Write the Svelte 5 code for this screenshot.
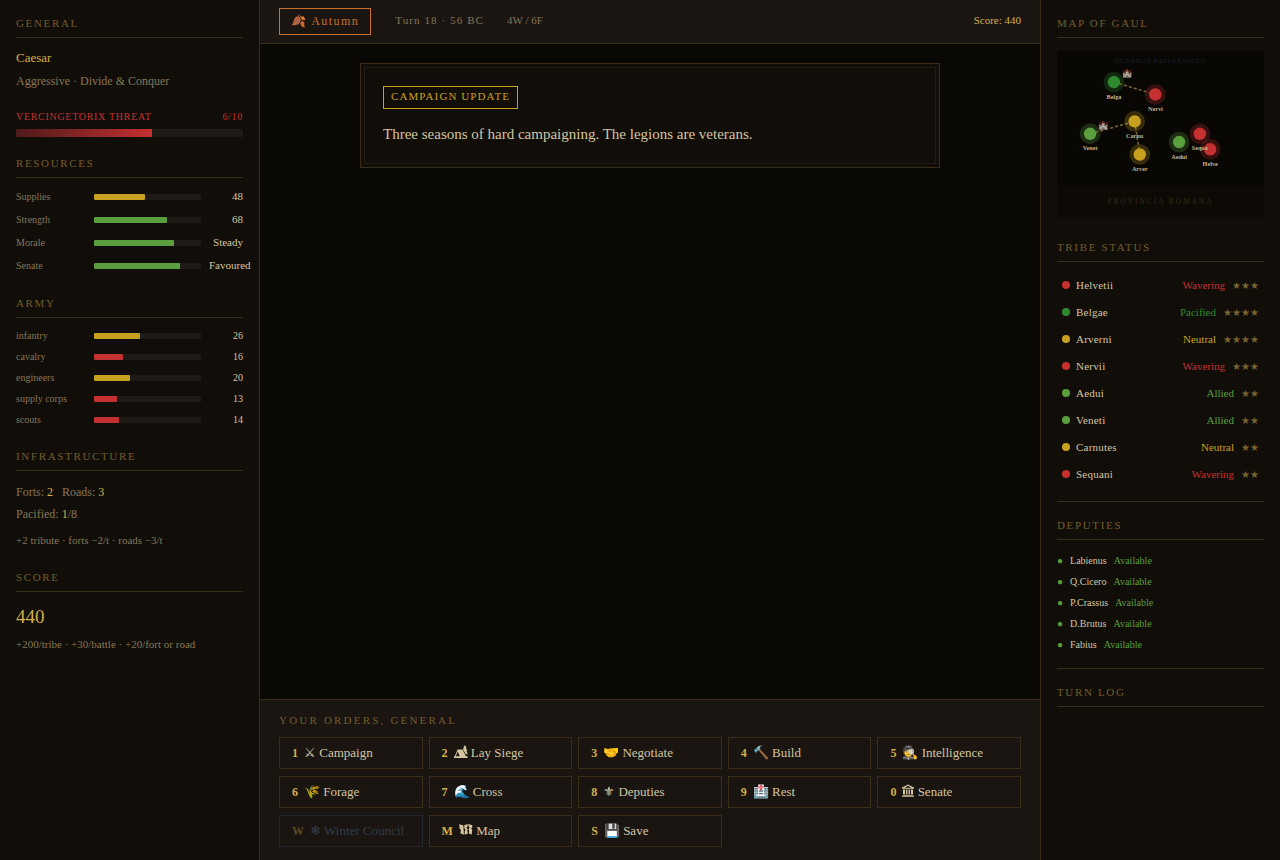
<script>
  const resources = [
    { label: 'Supplies', pct: 48, value: '48', tone: 'gold' },
    { label: 'Strength', pct: 68, value: '68', tone: 'green' },
    { label: 'Morale', pct: 75, value: 'Steady', tone: 'green' },
    { label: 'Senate', pct: 80, value: 'Favoured', tone: 'green' }
  ];

  const ARMY_MAX = 60;
  const army = [
    { label: 'infantry', value: 26, tone: 'gold' },
    { label: 'cavalry', value: 16, tone: 'red' },
    { label: 'engineers', value: 20, tone: 'gold' },
    { label: 'supply corps', value: 13, tone: 'red' },
    { label: 'scouts', value: 14, tone: 'red' }
  ];

  const tribes = [
    { name: 'Helvetii', status: 'Wavering', stars: 3, x: 148, y: 95 },
    { name: 'Belgae', status: 'Pacified', stars: 4, x: 55, y: 30, fort: true },
    { name: 'Arverni', status: 'Neutral', stars: 4, x: 80, y: 100 },
    { name: 'Nervii', status: 'Wavering', stars: 3, x: 95, y: 42 },
    { name: 'Aedui', status: 'Allied', stars: 2, x: 118, y: 88 },
    { name: 'Veneti', status: 'Allied', stars: 2, x: 32, y: 80, fort: true },
    { name: 'Carnutes', status: 'Neutral', stars: 2, x: 75, y: 68 },
    { name: 'Sequani', status: 'Wavering', stars: 2, x: 138, y: 80 }
  ];

  const statusColor = {
    Wavering: '#c53030',
    Pacified: '#2f8a2f',
    Neutral: '#c8a020',
    Allied: '#5a9e3e'
  };

  const roads = [
    ['Belgae', 'Nervii'],
    ['Veneti', 'Carnutes'],
    ['Carnutes', 'Arverni']
  ].map(([a, b]) => [tribes.find((t) => t.name === a), tribes.find((t) => t.name === b)]);

  const deputies = ['Labienus', 'Q.Cicero', 'P.Crassus', 'D.Brutus', 'Fabius'];

  const orders = [
    { key: '1', icon: '⚔', label: 'Campaign' },
    { key: '2', drawn: 'camp', label: 'Lay Siege' },
    { key: '3', icon: '🤝', label: 'Negotiate' },
    { key: '4', icon: '🔨', label: 'Build' },
    { key: '5', icon: '🕵', label: 'Intelligence' },
    { key: '6', icon: '🌾', label: 'Forage' },
    { key: '7', icon: '🌊', label: 'Cross' },
    { key: '8', icon: '⚜', label: 'Deputies' },
    { key: '9', icon: '🏥', label: 'Rest' },
    { key: '0', drawn: 'temple', label: 'Senate' },
    { key: 'W', icon: '❄', label: 'Winter Council', disabled: true },
    { key: 'M', drawn: 'chart', label: 'Map' },
    { key: 'S', icon: '💾', label: 'Save' }
  ];

  const drawings = {
    camp: {
      width: 14,
      d: 'M3.6 4.5H8.4L12 11.2H13.6V12.9H0V11.2H.8ZM3.7 6.6L1.9 11.2H5.7ZM10.9 0L12.6 3H11.9L13.4 6H12.4L13.9 9.2H11.9L8.9 4.4L9.9 3H9.2Z'
    },
    temple: {
      width: 12,
      d: 'M6 .5L12 3.6V4.8H0V3.6ZM6 1.7L2.6 3.7H9.4ZM1 5.6H3V10.4H1ZM4 5.6H5.4V10.4H4ZM6.6 5.6H8V10.4H6.6ZM9 5.6H11V10.4H9ZM.6 11H11.4V11.7H.6ZM0 12.2H12V13H0Z'
    },
    chart: {
      width: 14,
      d: 'M.2 1.2L4.4 2.4L4.9 11.8L1.3 10.2L1.9 7.2L.6 5.2ZM5.2 2.3L8.6 1L8.7 3.2L7.4 4.6L8.8 6.2L8.2 7.6L8.9 10.6L5.7 11.8L5.6 8.4L6.6 6.8L5.4 5.2ZM9.3 1L13.4 2.2L13.2 4.4L12 5.4L13.2 6.6L12.8 11.6L9.7 10.6L10.2 8.4L9.6 6.2L10.6 4.2L9.4 3Z'
    }
  };
</script>

<div class="game">
  <aside class="side left">
    <section class="general">
      <h2>General</h2>
      <p class="name">Caesar</p>
      <p class="traits">Aggressive · Divide &amp; Conquer</p>
      <div class="threat">
        <span>VERCINGETORIX THREAT</span>
        <span>6/10</span>
      </div>
      <div class="threat-track"><div class="threat-fill" style="width: 60%"></div></div>
    </section>

    <section>
      <h2>Resources</h2>
      <div class="stats">
        {#each resources as r}
          <div class="stat">
            <span class="label">{r.label}</span>
            <div class="track"><div class="fill {r.tone}" style="width: {r.pct}%"></div></div>
            <span class="value">{r.value}</span>
          </div>
        {/each}
      </div>
    </section>

    <section>
      <h2>Army</h2>
      <div class="stats">
        {#each army as a}
          <div class="stat small">
            <span class="label">{a.label}</span>
            <div class="track">
              <div class="fill {a.tone}" style="width: {(a.value / ARMY_MAX) * 100}%"></div>
            </div>
            <span class="value">{a.value}</span>
          </div>
        {/each}
      </div>
    </section>

    <section>
      <h2>Infrastructure</h2>
      <p class="infra">Forts: <b>2</b> &nbsp; Roads: <b>3</b><br />Pacified: <b>1</b>/8</p>
      <p class="note spaced">+2 tribute · forts −2/t · roads −3/t</p>
    </section>

    <section>
      <h2>Score</h2>
      <p class="score">440</p>
      <p class="note">+200/tribe · +30/battle · +20/fort or road</p>
    </section>
  </aside>

  <div class="center">
    <header>
      <span class="season">🍂 Autumn</span>
      <span class="turn">Turn 18 · 56 BC</span>
      <span class="record">4W / 6F</span>
      <span class="points">Score: 440</span>
    </header>

    <main>
      <article>
        <span class="tag">CAMPAIGN UPDATE</span>
        <p>Three seasons of hard campaigning. The legions are veterans.</p>
      </article>
    </main>

    <footer>
      <h3>Your Orders, General</h3>
      <div class="orders">
        {#each orders as o}
          <button disabled={o.disabled}>
            <span class="key">{o.key}</span>
            <span>
              {#if o.drawn}
                <svg
                  class="glyph"
                  width={drawings[o.drawn].width}
                  height="14"
                  viewBox="0 0 {drawings[o.drawn].width} 14"
                  aria-hidden="true"
                >
                  <path d={drawings[o.drawn].d} fill="currentColor" fill-rule="evenodd" />
                </svg>
              {:else}
                {o.icon}
              {/if}
              {o.label}
            </span>
          </button>
        {/each}
      </div>
    </footer>
  </div>

  <aside class="side right">
    <h2>Map of Gaul</h2>
    <svg class="map" viewBox="0 0 200 160" role="img" aria-label="Map of Gaul">
      <rect width="200" height="160" fill="#080704" />
      <rect y="130" width="200" height="30" fill="#0d0a06" />
      <text x="100" y="12" class="sea">OCEANUS BRITANNICUS</text>
      <text x="100" y="148" class="province">PROVINCIA ROMANA</text>
      {#each roads as [a, b]}
        <line x1={a.x} y1={a.y} x2={b.x} y2={b.y} class="road" />
      {/each}
      {#each tribes as t}
        <circle cx={t.x} cy={t.y} r="10" fill={statusColor[t.status]} opacity="0.25" />
        <circle cx={t.x} cy={t.y} r="6" fill={statusColor[t.status]} />
        <text x={t.x} y={t.y + 16} class="place">{t.name.slice(0, 5)}</text>
        {#if t.fort}
          <text x={t.x + 8} y={t.y - 6} class="fort">🏰</text>
        {/if}
      {/each}
    </svg>

    <h2>Tribe Status</h2>
    <ul class="tribes">
      {#each tribes as t}
        <li>
          <span class="dot" style="background: {statusColor[t.status]}"></span>
          <span class="tribe">{t.name}</span>
          <span style="color: {statusColor[t.status]}">{t.status}</span>
          <span class="stars">{'★'.repeat(t.stars)}</span>
        </li>
      {/each}
    </ul>

    <hr />
    <h2>Deputies</h2>
    <ul class="deputies">
      {#each deputies as d}
        <li>
          <span class="bullet">●</span>
          <span class="deputy">{d}</span>
          <span class="free">Available</span>
        </li>
      {/each}
    </ul>

    <hr />
    <h2>Turn Log</h2>
  </aside>
</div>

<style>
  :global(body) {
    background: #0a0804;
  }

  .game {
    display: grid;
    grid-template-columns: 260px 1fr 240px;
    min-height: 100vh;
    font-family: 'Liberation Serif', 'Times New Roman', serif;
    color: #d4c5a0;
    background: #0a0804;
  }

  h2,
  h3,
  p,
  ul {
    margin: 0;
    padding: 0;
    font-weight: normal;
    list-style: none;
  }

  .side {
    box-sizing: border-box;
    padding: 16px;
    background: #110e09;
  }

  .left {
    border-right: 1px solid #3a2c18;
  }

  .right {
    border-left: 1px solid #3a2c18;
  }

  section {
    margin-bottom: 22px;
  }

  .general {
    margin-bottom: 19px;
  }

  h2,
  h3 {
    font-size: 11px;
    line-height: 15px;
    color: #735c2c;
    text-transform: uppercase;
  }

  h2 {
    padding-bottom: 6px;
    border-bottom: 1px solid #3a2c18;
    letter-spacing: 0.15em;
  }

  .name {
    margin-top: 10px;
    font-size: 13px;
    line-height: 20px;
    color: #d4af4a;
  }

  .traits {
    margin-top: 3px;
    font-size: 12px;
    line-height: 20px;
    color: #857658;
  }

  .threat {
    display: flex;
    justify-content: space-between;
    margin: 18px 0 5px;
    font-size: 10px;
    line-height: 15px;
    letter-spacing: 0.07em;
    color: #c53030;
  }

  .threat-track {
    height: 8px;
    border-radius: 1px;
    overflow: hidden;
    background: #1e1b16;
  }

  .threat-fill {
    height: 100%;
    background: linear-gradient(90deg, #4f1a1a, #c53030);
  }

  .stats {
    display: grid;
    gap: 6px;
    margin-top: 10px;
  }

  .stat {
    display: flex;
    align-items: center;
    gap: 8px;
    line-height: 17px;
  }

  .label {
    flex: 0 0 70px;
    font-size: 10px;
    color: #857658;
  }

  .track {
    flex: 1;
    height: 6px;
    border-radius: 1px;
    overflow: hidden;
    background: #1e1b16;
  }

  .fill {
    height: 100%;
    border-radius: 1px;
  }

  .gold {
    background: #c8a020;
  }

  .green {
    background: #5a9e3e;
  }

  .red {
    background: #c53030;
  }

  .value {
    flex: 0 0 34px;
    width: 34px;
    font-size: 11px;
    text-align: right;
    white-space: nowrap;
  }

  .small {
    line-height: 15px;
  }

  .small .value {
    font-size: 10px;
  }

  .infra {
    margin-top: 10px;
    font-size: 12px;
    line-height: 22px;
    color: #857658;
  }

  .infra b {
    font-weight: normal;
    color: #d4af4a;
  }

  .note {
    margin-top: 4px;
    font-size: 11px;
    line-height: 16px;
    color: #857658;
  }

  .spaced {
    margin-top: 7px;
  }

  .score {
    margin-top: 10px;
    font-size: 19px;
    line-height: 30px;
    color: #d4af4a;
  }

  .center {
    display: flex;
    flex-direction: column;
    min-width: 0;
  }

  header {
    display: flex;
    align-items: flex-start;
    padding: 8px 19px;
    font-size: 11px;
    line-height: 24px;
    color: #857658;
    background: #1a1511;
    border-bottom: 1px solid #3a2c18;
  }

  .season {
    padding: 0 11px;
    margin-right: 24px;
    border: 1px solid #c8702c;
    font-size: 12px;
    line-height: 25px;
    letter-spacing: 0.12em;
    color: #c8702c;
  }

  .turn {
    margin-right: 23px;
    letter-spacing: 0.1em;
  }

  .points {
    margin-left: auto;
    color: #d4af4a;
  }

  main {
    flex: 1;
    padding: 19px 20px;
  }

  article {
    box-sizing: border-box;
    max-width: 580px;
    margin: 0 auto;
    padding: 22px 22px 19px;
    border: 1px solid #3a2c18;
    background: #110e09;
    outline: 1px solid #211c13;
    outline-offset: -5px;
  }

  .tag {
    display: inline-block;
    padding: 0 7px 2px;
    margin-bottom: 12px;
    border: 1px solid #c8a020;
    font-size: 11px;
    line-height: 19px;
    letter-spacing: 0.1em;
    color: #c8a020;
    vertical-align: top;
  }

  article p {
    font-size: 15px;
    line-height: 27px;
  }

  footer {
    padding: 13px 19px;
    background: #1a1511;
    border-top: 1px solid #3a2c18;
  }

  h3 {
    margin-bottom: 9px;
    letter-spacing: 0.2em;
  }

  .orders {
    display: grid;
    grid-template-columns: repeat(5, 1fr);
    gap: 7px 6px;
  }

  button {
    display: flex;
    align-items: center;
    gap: 6px;
    height: 32px;
    padding: 0 12px;
    border: 1px solid #3a2c18;
    background: transparent;
    font: 13px 'Liberation Serif', 'Times New Roman', serif;
    line-height: 16px;
    color: #d4c5a0;
    white-space: nowrap;
    cursor: pointer;
  }

  .key {
    font-size: 12px;
    font-weight: bold;
    color: #d4af4a;
  }

  .glyph {
    vertical-align: -2px;
  }

  button:disabled {
    border-color: #2c4a66;
    color: #5a86b0;
    opacity: 0.35;
    cursor: default;
  }

  .map {
    display: block;
    width: 100%;
    margin: 13px 0 23px;
  }

  .map text {
    text-anchor: middle;
  }

  .map .sea {
    font-size: 6px;
    letter-spacing: 1px;
    fill: #1a2530;
  }

  .map .province {
    font-size: 7px;
    letter-spacing: 2px;
    fill: #352b19;
  }

  .map .place {
    font-size: 6px;
    font-weight: bold;
    fill: #c2b391;
  }

  .map .fort {
    font-size: 8px;
    text-anchor: start;
  }

  .road {
    stroke: #7a6430;
    stroke-width: 1.5;
    stroke-dasharray: 3 2;
  }

  .tribes {
    margin: 10px 0 13px;
    font-size: 11px;
  }

  .tribes li {
    display: flex;
    align-items: center;
    padding: 0 5px;
    line-height: 27px;
  }

  .dot {
    width: 8px;
    height: 8px;
    margin-right: 6px;
    border-radius: 50%;
  }

  .tribe {
    flex: 1;
    letter-spacing: 0.02em;
  }

  .stars {
    margin-left: 7px;
    font-size: 10px;
    color: #7a6430;
  }

  hr {
    margin: 0 0 16px;
    border: 0;
    border-top: 1px solid #3a2c18;
  }

  .deputies {
    margin: 10px 0 13px;
    font-size: 10px;
  }

  .deputies li {
    display: flex;
    align-items: center;
    gap: 7px;
    line-height: 21px;
  }

  .bullet,
  .free {
    color: #5a9e3e;
  }
</style>
